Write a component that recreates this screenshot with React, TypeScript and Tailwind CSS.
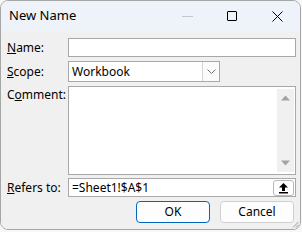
import React from 'react';

const font = { fontFamily: '"Noto Sans", "Open Sans", sans-serif' };

const Label = ({ k, rest }: { k: string; rest: string }) => (
  <span className="text-[12px] leading-none text-black">
    <u className="underline-offset-1">{k}</u>
    {rest}
  </span>
);

function TitleBar() {
  return (
    <div className="h-[30px] bg-[#eef3f9] flex items-center pl-[8px] shrink-0">
      <span className="text-[13px] text-black flex-1">New Name</span>
      <div className="flex items-center h-full">
        <div className="w-[45px] h-full flex items-center justify-center">
          <div className="w-[11px] h-px bg-[#c4c6c9]" />
        </div>
        <div className="w-[44px] h-full flex items-center justify-center">
          <div className="w-[10px] h-[10px] border border-black rounded-[1px]" />
        </div>
        <div className="w-[46px] h-full flex items-center justify-center">
          <svg width="11" height="11" viewBox="0 0 11 11">
            <path d="M0.5 0.5L10.5 10.5M10.5 0.5L0.5 10.5" stroke="#000" strokeWidth="1" />
          </svg>
        </div>
      </div>
    </div>
  );
}

function Triangle({ up }: { up?: boolean }) {
  return (
    <svg width="9" height="6" viewBox="0 0 9 6">
      <path d={up ? 'M0 5.5L4.5 0.5L9 5.5Z' : 'M0 0.5L4.5 5.5L9 0.5Z'} fill="#a3a3a3" />
    </svg>
  );
}

export default function App() {
  return (
    <div className="w-[302px] h-[232px] bg-[#f7f7f7]" style={font}>
      <div className="w-[301px] h-[230px] rounded-[8px] border border-[#a6a6a6] overflow-hidden flex flex-col relative">
        <TitleBar />
        <div className="flex-1 bg-[#f0f0f0] pt-[7px] pl-[6px] pr-[4px] flex flex-col">
          <div className="grid grid-cols-[61px_1fr] gap-y-[4px]">
            <div className="flex items-center h-[19px]">
              <Label k="N" rest="ame:" />
            </div>
            <div className="h-[19px] bg-white border border-[#a8a8a8]" />

            <div className="flex items-center h-[21px]">
              <Label k="S" rest="cope:" />
            </div>
            <div className="h-[21px] w-[152px] bg-white border border-[#a8a8a8] flex items-center">
              <span className="flex-1 pl-[3px] text-[12px] text-black">Workbook</span>
              <div className="w-[17px] h-full border-l border-[#d4d4d4] bg-[#fbfbfb] flex items-center justify-center">
                <svg width="9" height="5" viewBox="0 0 9 5">
                  <path d="M0.5 0.5L4.5 4.5L8.5 0.5" stroke="#707070" fill="none" strokeWidth="1" />
                </svg>
              </div>
            </div>

            <div className="h-[89px] pt-[2px]">
              <span className="block text-[12px] leading-[14px] text-black">
                C<u className="underline-offset-1">o</u>mment:
              </span>
            </div>
            <div className="h-[89px] bg-white border border-[#a8a8a8] flex justify-end p-[2px] pr-[1px] mb-[-1px]">
              <div className="w-[17px] h-full bg-[#f0f0f0] flex flex-col items-center justify-between py-[6px]">
                <Triangle up />
                <Triangle />
              </div>
            </div>

            <div className="flex items-center h-[19px] mt-[-1px]">
              <Label k="R" rest="efers to:" />
            </div>
            <div className="h-[19px] bg-white border border-[#a8a8a8] flex items-center mt-[-1px]">
              <span className="flex-1 pl-[3px] text-[12px] text-black">=Sheet1!$A$1</span>
              <div className="w-[21px] h-[16px] mr-[1px] border border-[#b9b9b9] rounded-[3px] bg-white flex items-center justify-center">
                <svg width="11" height="12" viewBox="0 0 11 12">
                  <path d="M5.5 1L1 5.5H4V9H7V5.5H10Z" fill="#000" />
                  <rect x="1" y="10" width="9" height="1.5" fill="#000" />
                </svg>
              </div>
            </div>
          </div>
          <div className="flex justify-end gap-[10px] mt-[4px] pr-[2px]">
            <button className="w-[74px] h-[22px] rounded-[4px] border border-[#0067c0] bg-[#fdfdfd] text-[12px] text-black leading-none">
              OK
            </button>
            <button className="w-[74px] h-[22px] rounded-[4px] border border-[#d0d0d0] bg-[#fdfdfd] text-[12px] text-black leading-none">
              Cancel
            </button>
          </div>
        </div>
        <svg className="absolute right-[1px] bottom-[1px]" width="7" height="7" viewBox="0 0 7 7">
          <path d="M6.5 1L1 6.5M6.5 4L4 6.5" stroke="#9a9a9a" strokeWidth="1" />
        </svg>
      </div>
    </div>
  );
}
